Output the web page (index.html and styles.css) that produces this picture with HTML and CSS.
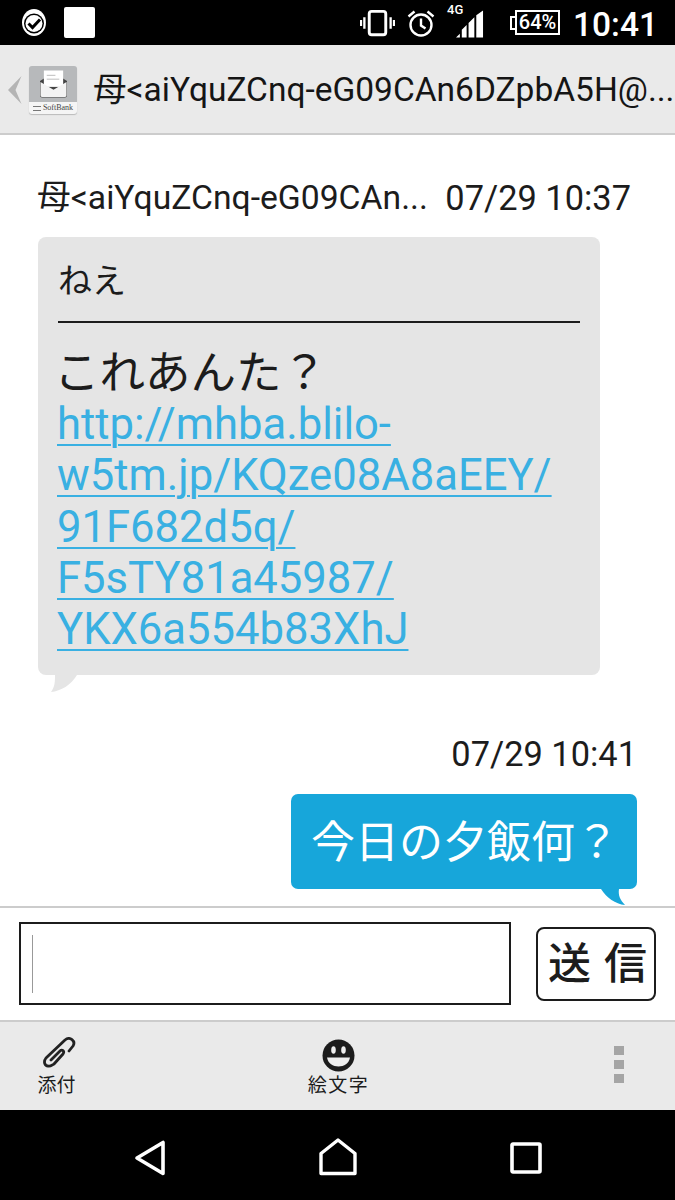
FILE: index.html
```html
<!DOCTYPE html>
<html lang="ja">
<head>
<meta charset="utf-8">
<title>メッセージ</title>
<link rel="stylesheet" href="styles.css">
</head>
<body>
<div class="phone">
  <div class="status">
    <div class="status-left">
      <svg class="ic-check" viewBox="0 0 26 28"><ellipse cx="13" cy="14" rx="12" ry="13.500" fill="#fff"/><circle cx="13" cy="15" r="10" fill="#000"/><circle cx="13" cy="15" r="8.500" fill="#fff"/><path d="M7.500 15l4 4 7.500-8" fill="none" stroke="#000" stroke-width="3"/></svg>
      <div class="white-square"></div>
    </div>
    <div class="status-right">
      <svg class="ic-vib" viewBox="0 0 36 28"><rect x="9.500" y="2" width="17" height="24" rx="2.500" fill="none" stroke="#fff" stroke-width="3"/><path d="M4.500 8v12M1 11v6M31.500 8v12M35 11v6" stroke="#fff" stroke-width="2.400" fill="none"/></svg>
      <svg class="ic-alarm" viewBox="0 0 28 28"><circle cx="14" cy="16" r="10.500" fill="none" stroke="#fff" stroke-width="2.400"/><path d="M14 9.500V16.500l4.500 3M1.500 7.500L7.500 2.500M26.500 7.500L20.500 2.500" fill="none" stroke="#fff" stroke-width="2.400"/></svg>
      <div class="net"><span class="net-label">4G</span>
        <svg class="ic-signal" viewBox="0 0 29 28"><path d="M0 28l4-4v4zM6 28v-8l5-5v13zM13 28V13l6-6v21zM21 28V5l7-5v28z" fill="#fff"/></svg>
      </div>
      <div class="battery"><span class="batt-cap"></span><span class="batt-body">64%</span></div>
      <span class="clock">10:41</span>
    </div>
  </div>

  <header class="head">
    <svg class="back" viewBox="0 0 14 28"><path d="M13.500 0L0 14l13.500 14L7.500 14z" fill="#b4b4b4"/></svg>
    <div class="app-icon">
      <svg class="mail" viewBox="0 0 28 28">
        <path d="M0 11L14 2l14 9v15a2 2 0 0 1-2 2H2a2 2 0 0 1-2-2z" fill="#444"/>
        <rect x="4" y="0" width="20" height="17" fill="#fff"/>
        <path d="M7 5h9M7 9h13" stroke="#bbb" stroke-width="1"/>
        <path d="M.5 12l13.500 8 13.500-8v14a1.500 1.500 0 0 1-1.500 1.500H2A1.500 1.500 0 0 1 .5 26z" fill="#f3f3f3"/>
      </svg>
      <div class="app-label"><span class="app-bars"></span><span class="app-name">SoftBank</span></div>
    </div>
    <h1 class="title">母&lt;aiYquZCnq-eG09CAn6DZpbA5H@...</h1>
  </header>

  <main class="thread">
    <div class="meta meta-in"><span class="sender">母&lt;aiYquZCnq-eG09CAn...</span><span class="time">07/29 10:37</span></div>
    <div class="bubble-in">
      <div class="subject">ねえ</div>
      <div class="body-text">これあんた？</div>
      <div class="links">
        <a class="link">http://mhba.blilo-</a>
        <a class="link">w5tm.jp/KQze08A8aEEY/</a>
        <a class="link">91F682d5q/</a>
        <a class="link">F5sTY81a45987/</a>
        <a class="link">YKX6a554b83XhJ</a>
      </div>
      <svg class="tail-in" viewBox="0 0 26 18"><path d="M4 0H26C20 10 10 16 0 17 4 12 4 6 4 0z" fill="#e5e5e5"/></svg>
    </div>
    <div class="meta meta-out"><span class="time">07/29 10:41</span></div>
    <div class="bubble-out"><span class="out-text">今日の夕飯何？</span>
      <svg class="tail-out" viewBox="0 0 24 16"><path d="M0 0h18c-1 6 1 11 6 16C14 15 6 9 0 0z" fill="#17a6da"/></svg>
    </div>
  </main>

  <div class="compose">
    <div class="input"><span class="caret"></span></div>
    <div class="send">送信</div>
  </div>

  <div class="tools">
    <div class="tool tool-attach">
      <svg class="ic-clip" viewBox="0 0 33 31"><path d="M26 14L30 9C33 4 27-1 22 3L3 21C0 25 2 29 5 29 7 30 9 28 11 27L20 17C22 14 19 12 17 14L8 23" fill="none" stroke="#222" stroke-width="2.800" stroke-linecap="round" stroke-linejoin="round"/></svg>
      <span class="tool-label">添付</span>
    </div>
    <div class="tool tool-emoji">
      <svg class="ic-smile" viewBox="0 0 33 33"><circle cx="16.500" cy="16.500" r="16" fill="#1c1c1c"/><ellipse cx="11.500" cy="11" rx="2.300" ry="3.800" fill="#eee"/><ellipse cx="21.500" cy="11" rx="2.300" ry="3.800" fill="#eee"/><path d="M5 18.500h23c-1 6-6 9-11.500 9S6 24.500 5 18.500z" fill="#eee"/></svg>
      <span class="tool-label">絵文字</span>
    </div>
    <div class="dots"><span></span><span></span><span></span></div>
  </div>

  <nav class="nav">
    <svg class="nav-back" viewBox="0 0 32 36"><path d="M29 2.500V33.500L3 18z" fill="none" stroke="#fff" stroke-width="3.600" stroke-linejoin="round"/></svg>
    <svg class="nav-home" viewBox="0 0 38 38"><path d="M2 35.500V15.500L19 2l17 13.500v20z" fill="none" stroke="#fff" stroke-width="3.400" stroke-linejoin="round"/></svg>
    <svg class="nav-recent" viewBox="0 0 32 32"><rect x="2" y="2" width="28" height="28" rx="1" fill="none" stroke="#fff" stroke-width="3.600"/></svg>
  </nav>
</div>
</body>
</html>
```

FILE: styles.css
```css
* { box-sizing: border-box; }
html, body { margin: 0; padding: 0; background: #fff; }
.phone {
  width: 675px; height: 1200px; overflow: hidden;
  display: flex; flex-direction: column;
  font-family: Roboto, "Noto Sans CJK JP", sans-serif;
  color: #1c1c1c;
}
.status {
  height: 45px; background: #000; flex: none;
  display: flex; justify-content: space-between; align-items: center;
  padding: 0 17px 0 21px;
}
.status-left { display: flex; align-items: center; gap: 17px; }
.ic-check { width: 26px; height: 29px; display: block; }
.white-square { width: 31px; height: 31px; background: #fff; border-radius: 2px; }
.status-right { display: flex; align-items: center; }
.ic-vib { width: 35px; height: 28px; margin-right: 12px; }
.ic-alarm { width: 28px; height: 28px; margin-right: 21px; }
.net { position: relative; width: 28px; height: 37px; margin-right: 26px; margin-top: 2px; }
.net-label { position: absolute; left: -9px; top: -2px; font-size: 13px; font-weight: 500; color: #fff; line-height: 14px; }
.ic-signal { position: absolute; left: 0; top: 5px; width: 28px; height: 28px; }
.battery { display: flex; align-items: center; margin-right: 13px; }
.batt-cap { width: 5px; height: 14px; border: 2px solid #fff; border-right: 0; }
.batt-body {
  width: 45px; height: 25px; border: 2px solid #fff;
  color: #fff; font-size: 20px; font-weight: 500; line-height: 21px; text-align: center; white-space: nowrap;
}
.clock { color: #fff; font-size: 33.500px; font-weight: 500; line-height: 45px; margin-top: 3px; }

.head {
  height: 90px; flex: none; background: #eaeaea; border-bottom: 2px solid #ccc;
  display: flex; align-items: center; padding: 2px 0 0 8px;
}
.back { width: 14px; height: 28px; margin-right: 7px; flex: none; }
.app-icon {
  width: 48px; height: 48px; background: #b7b9bb; border-radius: 3px; flex: none;
  display: flex; flex-direction: column; align-items: center; justify-content: space-between;
  box-shadow: 0 1px 1px #bbb; overflow: hidden; padding-top: 4px;
}
.mail { width: 27px; height: 28px; display: block; }
.app-label {
  width: 100%; height: 12px; background: #f5f5f5;
  display: flex; align-items: center; justify-content: center; gap: 2px;
}
.app-bars { width: 8px; height: 5px; border-top: 1px solid #777; border-bottom: 1px solid #777; }
.app-name { font-family: "Liberation Serif", serif; font-size: 8px; color: #444; line-height: 12px; }
.title {
  margin: 0 0 0 16px; font-size: 33.500px; font-weight: 400; line-height: 44px;
  white-space: nowrap; color: #151515;
}

.thread { flex: 1; min-height: 0; overflow: hidden; padding: 0 38px; display: flex; flex-direction: column; }
.meta { font-size: 34px; line-height: 42px; white-space: nowrap; flex: none; color: #1c1c1c; }
.sender { font-size: 33.700px; margin-left: -1px; }
.time { font-size: 34.400px; }
.meta-in { margin-top: 42px; display: flex; justify-content: space-between; margin-right: 6px; }
.bubble-in {
  position: relative; flex: none; width: 562px; height: 438px; margin-top: 18px;
  background: #e5e5e5; border-radius: 8px; padding: 20px 20px 0;
}
.subject { font-size: 34px; line-height: 49px; height: 66px; border-bottom: 2px solid #1c1c1c; }
.body-text { font-size: 45.500px; line-height: 50px; margin-top: 26px; margin-left: -4px; }
.links { display: flex; flex-direction: column; align-items: flex-start; margin-left: -1px; }
.link {
  font-size: 43.600px; line-height: 51.300px; color: #39b0e2; text-decoration: underline;
  text-decoration-thickness: 2px; text-underline-offset: 5px; white-space: nowrap;
}
.tail-in { position: absolute; left: 13px; top: 100%; width: 26px; height: 18px; display: block; }
.meta-out { margin-top: 58px; text-align: right; }
.bubble-out {
  position: relative; flex: none; align-self: flex-end; margin-top: 19px;
  width: 346px; height: 95px; background: #17a6da; border-radius: 7px;
  color: #fff; font-size: 44px; line-height: 99px; text-align: center; white-space: nowrap; padding-left: 2px;
}
.tail-out { position: absolute; right: 12px; top: 100%; width: 24px; height: 16px; display: block; }

.compose {
  height: 116px; flex: none; background: #fff; border-top: 2px solid #ccc; border-bottom: 2px solid #ccc;
  display: flex; align-items: flex-start; padding: 14px 19px 0;
}
.input {
  width: 493px; height: 83px; border: 2px solid #1c1c1c; background: #fff;
  display: flex; align-items: center; padding-left: 11px;
}
.caret { width: 1px; height: 58px; background: #999; }
.send {
  width: 120px; height: 74px; margin: 5px 0 0 25px; border: 2px solid #1c1c1c; border-radius: 8px;
  font-size: 43px; font-weight: 500; line-height: 70px; letter-spacing: 13px; white-space: nowrap; color: #1c1c1c;
  padding-left: 10px;
}

.tools {
  height: 88px; flex: none; background: #eaeaea; position: relative;
  display: flex; justify-content: space-between; align-items: flex-start; padding: 0 51px 0 37px;
}
.tool { display: flex; flex-direction: column; align-items: center; }
.tool-attach { padding-top: 15px; }
.tool-emoji { padding-top: 17px; margin-left: -13px; }
.ic-clip { width: 33px; height: 31px; display: block; margin-left: 6px; }
.ic-smile { width: 33px; height: 33px; display: block; }
.tool-label { font-size: 19px; line-height: 24px; color: #1c1c1c; white-space: nowrap; }
.tool-attach .tool-label { margin-top: 6px; }
.tool-emoji .tool-label { letter-spacing: 1.500px; margin-top: 2px; }
.dots { display: flex; flex-direction: column; gap: 5px; padding-top: 24px; }
.dots span { width: 10px; height: 9px; background: #a5a5a5; display: block; }

.nav {
  height: 90px; flex: none; background: #000; position: relative;
  display: flex; align-items: center; padding-left: 134px;
}
.nav-back { width: 32px; height: 36px; margin-right: 153px; margin-top: 6px; }
.nav-home { width: 38px; height: 38px; margin-right: 153px; margin-top: 4px; }
.nav-recent { width: 32px; height: 32px; margin-top: 6px; }
```
